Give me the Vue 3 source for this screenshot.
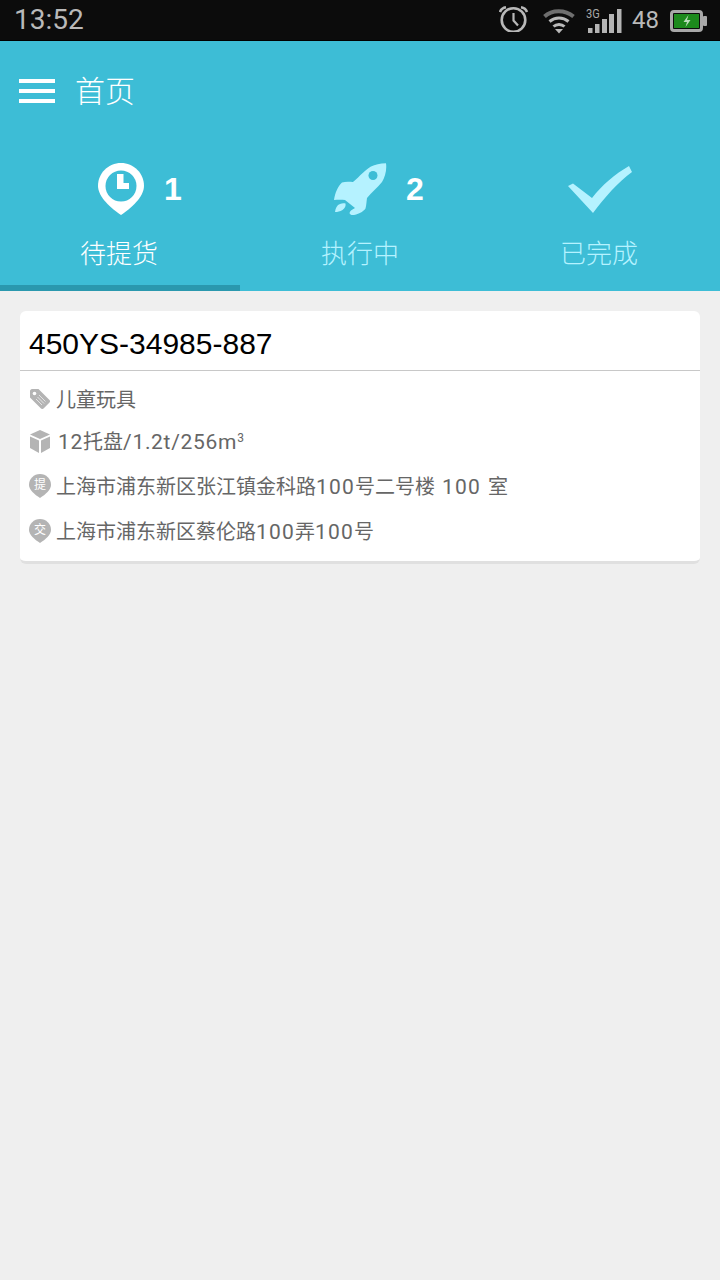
<script setup>
const tabs = [
  { label: '待提货', count: 1, icon: 'pin', active: true },
  { label: '执行中', count: 2, icon: 'rocket', active: false },
  { label: '已完成', count: null, icon: 'check', active: false },
]
</script>

<template>
  <div class="page">
    <div class="status">
      <span class="time">13:52</span>
      <div class="status-right">
        <svg class="alarm" width="30" height="26" viewBox="0 0 30 26" fill="none" stroke="#b9b9b9">
          <circle cx="14.500" cy="14" r="11.800" stroke-width="2.600" />
          <path d="M14.500 7v7.500l4.500 5" stroke-width="2.200" />
          <path d="M1 6C2 3.200 4 1.800 7 1.300M28 6C27 3.200 25 1.800 22 1.300" stroke-width="2.600" />
        </svg>
        <svg class="wifi" width="32" height="25" viewBox="0 0 32 25" fill="none" stroke="#b9b9b9">
          <path d="M1.500 7.500C9 0.500 22 0.500 30.500 7.500" stroke="#6f6f6f" stroke-width="4" />
          <path d="M6.500 12.500C12 7.800 20 7.800 25.500 12.500" stroke-width="3" />
          <path d="M10.500 17.500c3-2.800 8-2.800 11 0" stroke-width="3" />
          <path d="M12 20h8L16 24.500z" fill="#b9b9b9" stroke="none" />
        </svg>
        <div class="signal">
          <span class="g3">3G</span>
          <svg width="36" height="25" viewBox="0 0 36 25" fill="#b4b4b4">
            <rect x="2" y="20" width="4.500" height="5" />
            <rect x="9" y="16" width="4.500" height="9" />
            <rect x="16" y="11" width="5" height="14" />
            <rect x="23" y="6" width="5" height="19" />
            <rect x="31" y="1" width="4.500" height="24" />
          </svg>
        </div>
        <span class="level">48</span>
        <svg class="battery" width="38" height="22" viewBox="0 0 38 22">
          <rect x="1.500" y="1.500" width="30" height="19" rx="2.500" fill="none" stroke="#a8a8a8" stroke-width="3" />
          <rect x="4" y="4" width="25" height="14" fill="#1c8a1c" />
          <rect x="33" y="6" width="4" height="10" rx="1" fill="#a8a8a8" />
          <path d="M18.500 5 13.500 12h3.500l-1.500 5 5-7h-3.500z" fill="#b9dcb9" />
        </svg>
      </div>
    </div>

    <header class="head">
      <div class="bar">
        <div class="menu"><i></i><i></i><i></i></div>
        <span class="title">首页</span>
      </div>
      <div class="tabs">
        <div v-for="t in tabs" :key="t.label" class="tab" :class="{ on: t.active }">
          <div class="ic">
            <svg v-if="t.icon === 'pin'" class="pin" width="46" height="52" viewBox="0 0 46 52">
              <path d="M23 0C10.300 0 0 10.200 0 22.800 0 34 13 45.500 23 52 33 45.500 46 34 46 22.800 46 10.200 35.700 0 23 0z" fill="#fff" />
              <circle cx="23" cy="23" r="15.500" fill="#3dbdd6" />
              <path d="M19 11h6.500v9H31v6H19z" fill="#fff" />
            </svg>
            <svg v-else-if="t.icon === 'rocket'" width="54" height="52" viewBox="33 13 54 52">
              <path d="M86 13.300C80 13.500 75 14.500 71 16.500 66 19 60 26 53 32 48.500 31.500 45 31.500 42 32.500 38 36 35 43 34 50 38 49.500 42 49.500 45 50L55 58C52 59.500 50 61 49.500 63 50 65 52 65.300 54 65 60 63.500 64 61 65.500 58.500 66.500 55 66.500 51 67 48 72 42 77 38 82 32 85 27 87 20 86 13.300z" fill="#b5f2ff" />
              <circle cx="73" cy="25.500" r="4.500" fill="#3dbdd6" />
              <path d="M35 62C35.500 58 37 55 40 54 42 53 44 53 45.500 53.500 46 56 45 58 42.500 60 40 61.500 37.500 62 35 62z" fill="#b5f2ff" />
            </svg>
            <svg v-else width="64" height="48" viewBox="28 14 64 48">
              <path d="M28 35 33 32.500 52 47C62 34 75 23 89 15L92 21C78 31 65 46 53 62z" fill="#b5f2ff" />
            </svg>
            <span v-if="t.count" class="count">{{ t.count }}</span>
          </div>
          <span class="label">{{ t.label }}</span>
        </div>
      </div>
    </header>

    <main class="list">
      <section class="card">
        <div class="code">450YS-34985-887</div>
        <div class="rows">
          <div class="row r1">
            <svg width="20" height="20" viewBox="0 0 20 20">
              <path d="M0 2C0 1 1 0 2 0H8.500L19.500 11C20.200 11.800 20.200 12.800 19.500 13.500L13.500 19.500C12.800 20.200 11.800 20.200 11 19.500L0 8.500z" fill="#b4b4b4" />
              <circle cx="4.500" cy="4.500" r="1.800" fill="#fff" />
              <path d="M9 6l6.500 6.500M7.500 8l6.500 6.500M6 10l6 6" stroke="#e4e4e4" stroke-width="1" />
            </svg>
            <span class="txt">儿童玩具</span>
          </div>
          <div class="row r2">
            <svg width="20" height="23" viewBox="0 0 20 23">
              <path d="M10 0 20 4.500 10 9 0 4.500z" fill="#b4b4b4" />
              <path d="M0 6.500 9 10.500V23L0 18z" fill="#b4b4b4" />
              <path d="M20 6.500 11 10.500V23L20 18z" fill="#b4b4b4" />
            </svg>
            <span class="txt tx2"><b>12</b>托盘<b>/1.2t/256m</b><sup>3</sup></span>
          </div>
          <div class="row r3">
            <svg class="mark" width="22" height="24" viewBox="0 0 22 24">
              <path d="M11 0C4.900 0 0 4.800 0 10.800 0 16 5.500 20.500 11 24 16.500 20.500 22 16 22 10.800 22 4.800 17.100 0 11 0z" fill="#b4b4b4" />
              <text x="11" y="15" text-anchor="middle">提</text>
            </svg>
            <span class="txt wide">上海市浦东新区张江镇金科路<b>100</b>号二号楼 <b>100</b> 室</span>
          </div>
          <div class="row r4">
            <svg class="mark" width="22" height="24" viewBox="0 0 22 24">
              <path d="M11 0C4.900 0 0 4.800 0 10.800 0 16 5.500 20.500 11 24 16.500 20.500 22 16 22 10.800 22 4.800 17.100 0 11 0z" fill="#b4b4b4" />
              <text x="11" y="15" text-anchor="middle">交</text>
            </svg>
            <span class="txt">上海市浦东新区蔡伦路<b>100</b>弄<b>100</b>号</span>
          </div>
        </div>
      </section>
    </main>
  </div>
</template>

<style>
html, body { margin: 0; background: #efefef; }
</style>

<style scoped>
.page {
  width: 720px;
  min-height: 1280px;
  background: #efefef;
  font-family: "Noto Sans CJK SC", Roboto, sans-serif;
}
.status {
  height: 40px;
  background: #0c0c0c;
  border-bottom: 1px solid #000;
  display: flex;
  align-items: center;
  justify-content: space-between;
  padding: 0 12px 0 14px;
  color: #b9b9b9;
  font-family: Roboto, sans-serif;
}
.time { font-size: 28px; line-height: 40px; }
.status-right { display: flex; align-items: center; }
.alarm { margin: -3px 14px 0 0; }
.wifi { margin: 2px 11px 0 0; }
.signal { position: relative; width: 36px; height: 25px; margin: 1px 10px 0 0; }
.signal svg { display: block; }
.g3 {
  position: absolute;
  left: 0;
  top: -1px;
  font-size: 13px;
  line-height: 14px;
  color: #a8a8a8;
  transform: scaleX(0.85);
  transform-origin: left;
}
.level { font-size: 24px; line-height: 40px; margin-right: 11px; }
.battery { margin-top: 2px; }
.head { background: #3dbdd6; }
.bar {
  height: 100px;
  display: flex;
  align-items: center;
  padding-left: 19px;
}
.menu { width: 36px; display: flex; flex-direction: column; gap: 6px; margin-right: 20px; }
.menu i { display: block; height: 4px; background: #fff; }
.title { color: #fff; font-size: 30px; font-weight: 300; line-height: 40px; margin-top: -4px; }
.tabs { display: flex; height: 150px; }
.tab {
  flex: 0 0 240px;
  height: 144px;
  border-bottom: 6px solid transparent;
  display: flex;
  flex-direction: column;
  align-items: center;
  color: #b5f2ff;
}
.tab.on { border-bottom-color: #2a98ae; color: #fff; }
.ic {
  position: relative;
  height: 52px;
  margin-top: 22px;
  display: flex;
  align-items: center;
}
.ic svg { display: block; }
.ic .pin { margin-left: 2px; }
.count {
  position: absolute;
  left: calc(100% + 19px);
  top: 7px;
  color: #fff;
  font-family: "Liberation Sans", sans-serif;
  font-weight: 700;
  font-size: 32px;
  line-height: 38px;
}
.tab.on .count { left: calc(100% + 20px); }
.label { font-size: 26px; line-height: 36px; margin-top: 19px; font-weight: 300; }
.tab:not(:nth-child(2)) .label { margin-right: 2px; }
.list { padding: 20px; }
.card {
  background: #fff;
  border-radius: 6px;
  border-bottom: 3px solid #e0e0e0;
  height: 250px;
}
.code {
  height: 59px;
  line-height: 66px;
  padding-left: 9px;
  font-family: "Liberation Sans", sans-serif;
  font-size: 30px;
  color: #000;
  border-bottom: 1px solid #c8c8c8;
}
.rows { padding-top: 7px; }
.row {
  display: flex;
  align-items: center;
  padding-left: 10px;
  color: #666;
}
.r1, .r2, .r4 { height: 42px; }
.r3 { height: 48px; }
.row svg { flex: none; }
.txt { font-size: 20px; line-height: 28px; margin-left: 6px; white-space: pre; }
.tx2 { margin-left: 8px; }
.wide { word-spacing: 2.500px; }
.txt b {
  font-family: Roboto, sans-serif;
  font-weight: 400;
  font-size: 21px;
  letter-spacing: 1.200px;
}
.tx2 b { letter-spacing: 0.700px; }
.txt sup { font-size: 12px; line-height: 0; vertical-align: 7px; font-family: Roboto, sans-serif; }
.mark text { fill: #fff; font-size: 12px; }
.mark { margin-left: -1px; margin-right: -1px; }
</style>
